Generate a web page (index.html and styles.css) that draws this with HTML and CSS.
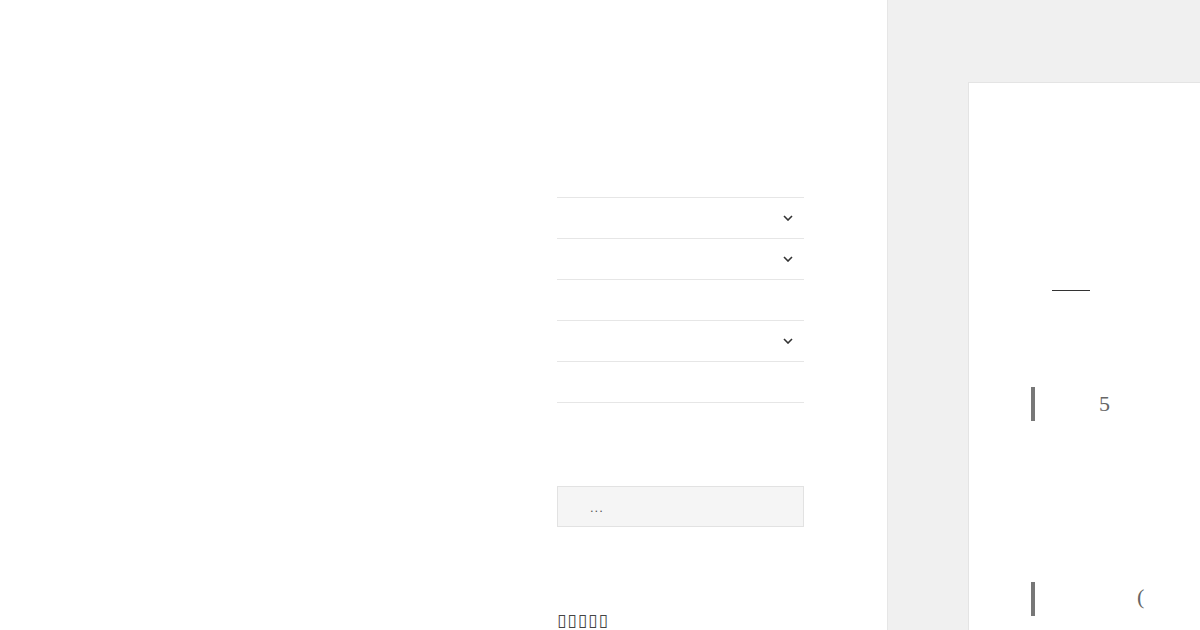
FILE: index.html
```html
<!DOCTYPE html>
<html lang="zh">
<head>
<meta charset="utf-8">
<title>Page</title>
<link rel="stylesheet" href="styles.css">
</head>
<body>
<div class="page">
  <main class="main">
    <div class="sidebar">
      <ul class="menu">
        <li class="menu-item"><span class="label"></span><svg class="chev" width="10" height="6" viewBox="0 0 10 6"><polyline points="1,1 5,5 9,1" fill="none" stroke="#333" stroke-width="1.6"/></svg></li>
        <li class="menu-item"><span class="label"></span><svg class="chev" width="10" height="6" viewBox="0 0 10 6"><polyline points="1,1 5,5 9,1" fill="none" stroke="#333" stroke-width="1.6"/></svg></li>
        <li class="menu-item"><span class="label"></span></li>
        <li class="menu-item"><span class="label"></span><svg class="chev" width="10" height="6" viewBox="0 0 10 6"><polyline points="1,1 5,5 9,1" fill="none" stroke="#333" stroke-width="1.6"/></svg></li>
        <li class="menu-item last"><span class="label"></span></li>
      </ul>
      <div class="search"><span class="placeholder">...</span></div>
      <div class="widget-title">▯▯▯▯▯</div>
    </div>
  </main>
  <aside class="aside">
    <div class="card">
      <div class="rule"></div>
      <div class="quote quote-one"><span class="bar"></span><span class="qtext">5</span></div>
      <div class="quote quote-two"><span class="bar"></span><span class="qtext">(</span></div>
    </div>
  </aside>
</div>
</body>
</html>
```
FILE: styles.css
```css
html, body {
  margin: 0;
  padding: 0;
  background: #fff;
  height: 630px;
  overflow: hidden;
  font-family: "Liberation Serif", serif;
}
.page {
  display: flex;
  height: 630px;
  overflow: hidden;
}
.main {
  width: 887px;
  flex: none;
  background: #fff;
}
.sidebar {
  margin-left: 557px;
  width: 247px;
  padding-top: 197px;
}
.menu {
  list-style: none;
  margin: 0;
  padding: 0;
}
.menu-item {
  height: 40px;
  border-top: 1px solid #e6e6e6;
  display: flex;
  align-items: center;
  justify-content: space-between;
  padding-right: 11px;
}
.menu-item.last {
  border-bottom: 1px solid #e6e6e6;
}
.chev {
  display: block;
}
.search {
  margin-top: 83px;
  height: 39px;
  border: 1px solid #e2e2e2;
  background: #f5f5f5;
  display: flex;
  align-items: center;
  padding-left: 32px;
}
.placeholder {
  font-family: "Liberation Sans", sans-serif;
  font-size: 13px;
  color: #555;
  letter-spacing: 1px;
  margin-top: 1px;
}
.widget-title {
  margin-top: 85px;
  font-family: "DejaVu Sans", sans-serif;
  font-size: 17px;
  line-height: 16px;
  color: #444;
  letter-spacing: 1px;
}
.aside {
  flex: 1;
  background: #f0f0f0;
  border-left: 1px solid #e6e6e6;
  padding-top: 82px;
  padding-left: 80px;
  box-sizing: border-box;
  height: 630px;
}
.card {
  background: #fff;
  border-top: 1px solid #e4e4e4;
  border-left: 1px solid #e4e4e4;
  height: 100%;
  box-sizing: border-box;
  padding-left: 62px;
  padding-top: 207px;
}
.rule {
  width: 38px;
  height: 1px;
  background: #333;
  margin-left: 21px;
}
.quote {
  display: flex;
  align-items: center;
  height: 34px;
}
.quote-one {
  margin-top: 96px;
}
.quote-two {
  margin-top: 161px;
}
.bar {
  width: 4px;
  height: 34px;
  background: #777;
  flex: none;
}
.qtext {
  font-size: 22px;
  color: #666;
}
.quote-one .qtext {
  margin-left: 64px;
}
.quote-two .qtext {
  margin-left: 102px;
  margin-bottom: 4px;
}
```
